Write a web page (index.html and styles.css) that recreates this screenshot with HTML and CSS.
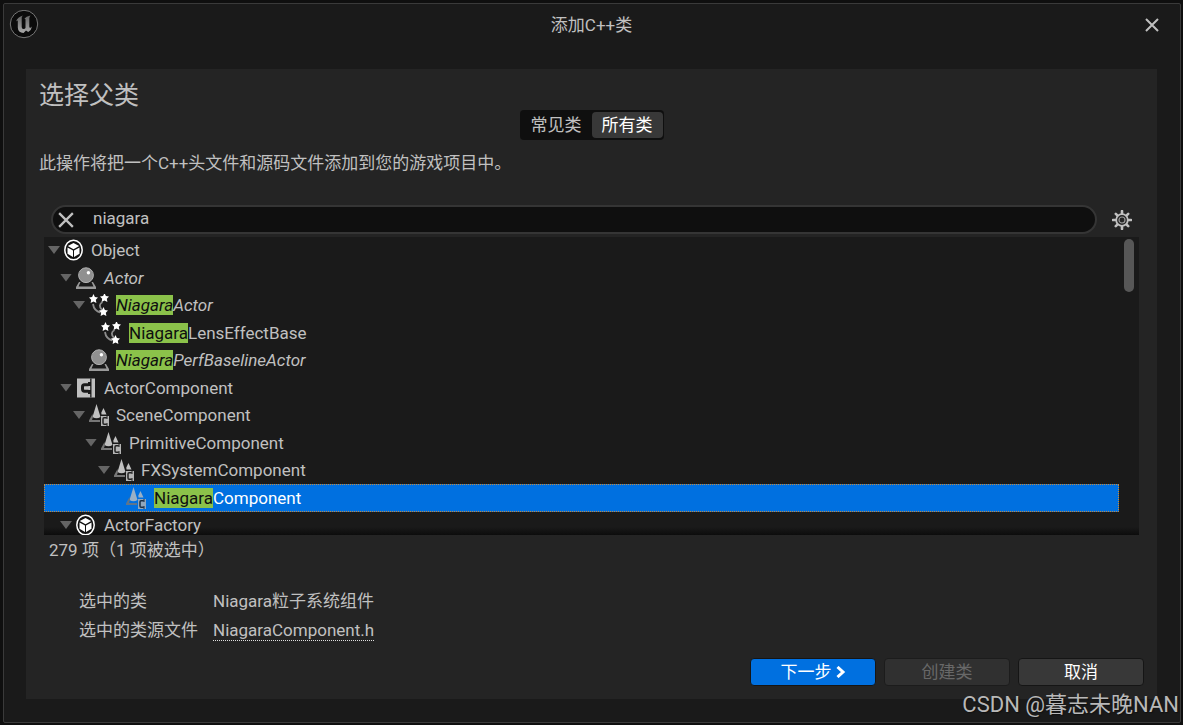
FILE: index.html
```html
<!DOCTYPE html>
<html lang="zh-CN">
<head>
<meta charset="utf-8">
<title>添加C++类</title>
<link rel="stylesheet" href="styles.css">
</head>
<body>
<svg class="symbols" aria-hidden="true">
  <symbol id="object" viewBox="0 0 20 22">
    <ellipse cx="9.500" cy="11" rx="8.700" ry="9.800" fill="#111" stroke="#fff" stroke-width="1.500"/>
    <path d="M9.500 4 15.200 7 9.500 10.200 3.800 7zM3.500 8.400 9 11.400V18L3.500 14.800zM15.500 8.400 10 11.400V18L15.500 14.800z" fill="#fff"/>
  </symbol>
  <symbol id="actor" viewBox="0 0 20 22">
    <path d="M3 15H4.500L2.500 19.500H17.500L15.500 15H17L20 20V22H0V20z" fill="#999"/>
    <circle cx="10" cy="8.200" r="7.400" fill="#909090" stroke="#b0b0b0" stroke-width="1"/>
    <circle cx="12.400" cy="5.800" r="1.700" fill="#fff"/>
  </symbol>
  <symbol id="niagara" viewBox="0 0 20 22">
    <path d="M4 10Q5 17 11.500 18.500M13.500 8Q8.500 11 13 16" fill="none" stroke="#8c8c8c" stroke-width="1.800"/>
    <g fill="#fff">
      <path id="star" d="M4.500 0 5.900 3 9 3.500 6.800 5.800 7.400 9 4.500 7.500 1.600 9 2.200 5.800 0 3.500 3.100 3z"/>
      <use href="#star" x="11" y="-1"/>
      <use href="#star" x="10" y="13"/>
    </g>
  </symbol>
  <symbol id="component" viewBox="0 0 20 22">
    <path d="M1 1.500H19V20.500H1z" fill="#c0c0c0"/>
    <path d="M13.500 7.800H9.500Q7.500 7.800 7.500 10V12Q7.500 14.200 9.500 14.200H13.500" transform="translate(-1 0)" fill="none" stroke="#1a1a1a" stroke-width="3"/>
    <path d="M12 5H14.500V9H12zM12 13H14.500V17H12zM14.200 1.500H15.500V20.500H14.200z" fill="#1a1a1a"/>
  </symbol>
  <symbol id="scene" viewBox="0 0 20 22">
    <path d="M7.500 0 11.500 13Q7.500 15.500 3.500 13zM14.500 4 17.500 10.500H12.500L12.300 8.500z" fill="#c0c0c0"/>
    <path d="M3.500 10 0 16.500V18H11V16H3L4 13z" fill="#777"/>
    <path d="M12 12H20V22H12z" fill="#b5b5b5"/>
    <path d="M17.800 13.700H15Q14 13.700 14 15V19Q14 20.300 15 20.300H17.800" fill="none" stroke="#222" stroke-width="1.500"/>
    <path d="M18 12V15M18 19V22" fill="none" stroke="#222"/>
  </symbol>
</svg>

<div class="window">
  <header class="titlebar">
    <svg class="logo" viewBox="0 0 30 30" aria-hidden="true">
      <defs><linearGradient id="metal" x2="0" y2="1"><stop stop-color="#666"/><stop offset="1" stop-color="#aaa"/></linearGradient></defs>
      <circle cx="15" cy="14" r="13.700" fill="#0b0b0b" stroke="#777" stroke-width="1"/>
      <path d="M7 11.500Q8.500 7 14 5.500 12.500 6.500 12.700 8V17Q12.700 19 14.500 19 16 19 16.500 18V9.500Q16.500 8.500 15.300 8.800 17 6.500 21.500 5.500 20.300 7 20.300 8.500V16.500Q20.300 18 21.500 17.700 22.500 17.500 23.200 16.300 22.500 20 19.200 22L17 20.500 14.500 23Q9 22.500 8.800 17.500V11Q8.600 9.800 7 11.500z" fill="url(#metal)"/>
    </svg>
    <h1 class="title">添加C++类</h1>
    <button class="close" aria-label="关闭"><svg viewBox="0 0 14 14"><path d="M1 1 13 13M13 1 1 13"/></svg></button>
  </header>

  <main class="panel">
    <h2 class="heading">选择父类</h2>
    <div class="tabs" role="radiogroup" aria-label="类筛选">
      <label class="tab"><input type="radio" name="scope">常见类</label>
      <label class="tab"><input type="radio" name="scope" checked>所有类</label>
    </div>
    <p class="intro">此操作将把一个C++头文件和源码文件添加到您的游戏项目中。</p>

    <div class="searchrow">
      <div class="search">
        <button class="clear" aria-label="清除"><svg viewBox="0 0 14 14"><path d="M1 1 13 13M13 1 1 13"/></svg></button>
        <input class="query" type="text" value="niagara" aria-label="搜索">
      </div>
      <button class="settings" aria-label="设置">
        <svg viewBox="0 0 20 20">
          <path d="M10 1V19M1 10H19M3.800 3.800 16.200 16.200M16.200 3.800 3.800 16.200" stroke="#c0c0c0" stroke-width="2.600" stroke-linecap="round"/>
          <circle cx="10" cy="10" r="5.800" fill="#242424" stroke="#c0c0c0" stroke-width="1.800"/>
          <circle cx="10" cy="10" r="3" fill="none" stroke="#999" stroke-width="1.200"/>
        </svg>
      </button>
    </div>

    <div class="treebox">
      <ul class="tree" role="tree">
        <li class="row l0" role="treeitem"><i class="arrow"></i><svg class="icon"><use href="#object"/></svg><span>Object</span></li>
        <li class="row l1" role="treeitem"><i class="arrow"></i><svg class="icon"><use href="#actor"/></svg><em>Actor</em></li>
        <li class="row l2" role="treeitem"><i class="arrow"></i><svg class="icon"><use href="#niagara"/></svg><em><mark>Niagara</mark>Actor</em></li>
        <li class="row l3" role="treeitem"><i class="arrow leaf"></i><svg class="icon"><use href="#niagara"/></svg><span><mark>Niagara</mark>LensEffectBase</span></li>
        <li class="row l2" role="treeitem"><i class="arrow leaf"></i><svg class="icon"><use href="#actor"/></svg><em><mark>Niagara</mark>PerfBaselineActor</em></li>
        <li class="row l1" role="treeitem"><i class="arrow"></i><svg class="icon"><use href="#component"/></svg><span>ActorComponent</span></li>
        <li class="row l2" role="treeitem"><i class="arrow"></i><svg class="icon"><use href="#scene"/></svg><span>SceneComponent</span></li>
        <li class="row l3" role="treeitem"><i class="arrow"></i><svg class="icon"><use href="#scene"/></svg><span>PrimitiveComponent</span></li>
        <li class="row l4" role="treeitem"><i class="arrow"></i><svg class="icon"><use href="#scene"/></svg><span>FXSystemComponent</span></li>
        <li class="row l5 selected" role="treeitem" aria-selected="true"><i class="arrow leaf"></i><svg class="icon"><use href="#scene"/></svg><span><mark>Niagara</mark>Component</span></li>
        <li class="row l1" role="treeitem"><i class="arrow"></i><svg class="icon"><use href="#object"/></svg><span>ActorFactory</span></li>
      </ul>
      <div class="track"><div class="thumb"></div></div>
    </div>
    <p class="count">279 项（1 项被选中）</p>

    <dl class="details">
      <dt>选中的类</dt><dd>Niagara粒子系统组件</dd>
      <dt>选中的类源文件</dt><dd><a class="source" href="#">NiagaraComponent.h</a></dd>
    </dl>

    <footer class="actions">
      <button class="btn primary">下一步<svg class="chevron" viewBox="0 0 10 12"><path d="M1.500 1 7 6 1.500 11"/></svg></button>
      <button class="btn" disabled>创建类</button>
      <button class="btn">取消</button>
    </footer>
  </main>
</div>
<div class="watermark">CSDN @暮志未晚NAN</div>
</body>
</html>
```
FILE: styles.css
```css
* { box-sizing: border-box; }

body {
  margin: 0;
  min-height: 100vh;
  display: flex;
  padding: 3px 2px 2px 3px;
  background: #0f0f0f;
  color: #c0c0c0;
  font: 17px/20px Roboto, "Noto Sans CJK SC", sans-serif;
}

h1, h2, p, ul, dl, dd { margin: 0; padding: 0; font-weight: 400; }
button, input { font: inherit; color: inherit; }
button { border: 0; padding: 0; background: none; }
.symbols { position: absolute; width: 0; height: 0; }

.window {
  flex: 1;
  display: flex;
  flex-direction: column;
  border: 1px solid #3a3a3a;
  border-radius: 2px;
  background: #1a1a1a;
  padding: 0 23px 23px 22px;
}

.titlebar {
  display: grid;
  grid-template-columns: 1fr auto 1fr;
  align-items: center;
  height: 42px;
  margin: 0 -17px 23px;
}
.logo { width: 30px; height: 30px; }
.title { font-size: 17px; }
.close { justify-self: end; width: 24px; height: 24px; margin-right: 10px; display: grid; place-items: center; }
.close svg { width: 14px; height: 14px; }
.close path, .clear path { fill: none; stroke: #c0c0c0; stroke-width: 2; }

.panel {
  flex: 1;
  display: flex;
  flex-direction: column;
  background: #242424;
  padding: 13px;
}
.heading { font-size: 25px; line-height: 28px; }

.tabs {
  align-self: center;
  display: flex;
  background: #0f0f0f;
  border-radius: 4px;
  padding: 2px 1px;
}
.tab { position: relative; padding: 3px 10px; border-radius: 4px; }
.tab input { position: absolute; opacity: 0; margin: 0; }
.tab:has(:checked) { background: #383838; color: #fff; }
.intro { margin-top: 13px; }

.searchrow { display: flex; align-items: center; margin: 32px 12px 3px; }
.search {
  flex: 1;
  display: flex;
  align-items: center;
  height: 29px;
  border: 2px solid #353535;
  border-radius: 15px;
  background: #0f0f0f;
  padding-left: 5px;
}
.clear { display: grid; width: 16px; height: 16px; }
.query {
  flex: 1;
  min-width: 0;
  border: 0;
  outline: 0;
  background: none;
  padding: 0 0 3px;
  margin-left: 19px;
}
.settings { display: grid; width: 20px; height: 20px; margin: 0 0 0 15px; }

.treebox {
  display: flex;
  height: 298px;
  overflow: hidden;
  margin: 0 5px;
  background: linear-gradient(transparent 290px, #0c0c0c), #1a1a1a;
}
.tree { flex: 1; list-style: none; display: grid; grid-auto-rows: 27px 28px; }
.row { display: flex; align-items: center; white-space: nowrap; border: 1px solid transparent; padding-bottom: 1px; }
.l0 { padding-left: 3px; }
.l1 { padding-left: 15px; }
.l2 { padding-left: 28px; }
.l3 { padding-left: 40px; }
.l4 { padding-left: 53px; }
.l5 { padding-left: 65px; }
.selected { background: #0070e0; border: 1px dotted #c88a3a; color: #fff; }
.arrow { width: 12px; height: 8px; background: #656565; clip-path: polygon(0 0, 100% 0, 50% 100%); }
.leaf { visibility: hidden; }
.icon { width: 20px; height: 22px; margin: 0 8px 0 4px; }
.l0 .icon, .l2 .icon, .l4 .icon { margin-right: 7px; }
.selected .icon { opacity: 0.8; }
mark { background: #8bc24a; color: #0f0f0f; }
.track { width: 20px; padding: 2px 5px; }
.thumb { width: 10px; height: 53px; border-radius: 5px; background: #575757; }

.count { margin: 5px 10px 0; }
.details {
  display: grid;
  grid-template-columns: max-content 1fr;
  gap: 9px 15px;
  margin: 31px 40px 0;
}
.source { color: inherit; text-decoration: none; border-bottom: 1px dotted #e0e0e0; }

.actions { display: flex; justify-content: flex-end; gap: 8px; margin-top: auto; }
.btn {
  width: 126px;
  height: 28px;
  border: 1px solid #151515;
  border-radius: 4px;
  background: #383838;
  color: #fff;
}
.btn:disabled { background: #303030; color: #686868; border-color: #1c1c1c; }
.primary { background: #0070e0; }
.chevron { width: 10px; height: 12px; margin-left: 4px; }
.chevron path { fill: none; stroke: #fff; stroke-width: 3; }

.watermark {
  position: absolute;
  right: 4px;
  bottom: 5px;
  font-size: 22px;
  line-height: 30px;
  color: #b8b8b8;
  text-shadow: 1px 1px 1px #111;
}
```
